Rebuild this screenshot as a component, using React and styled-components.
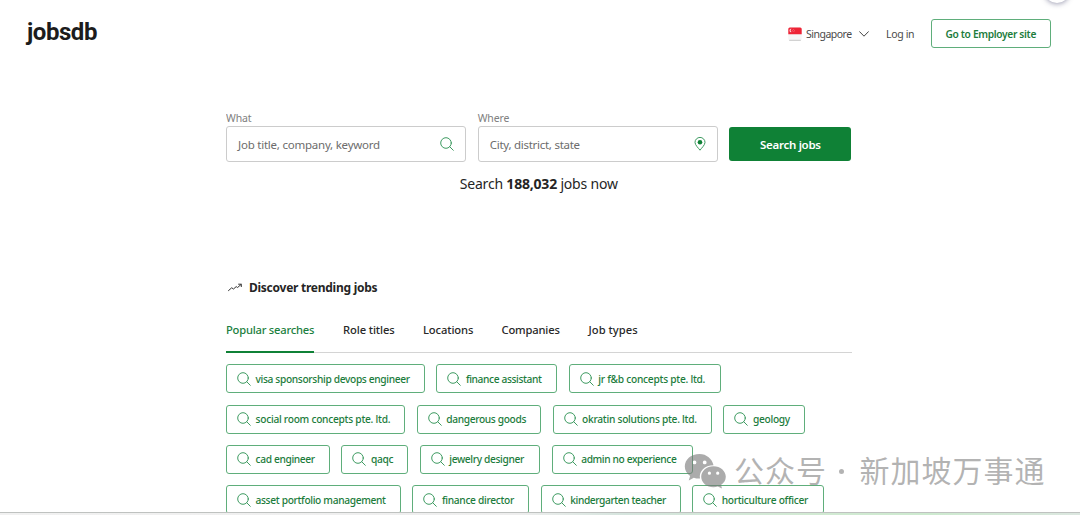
import React from "react";
import styled, { createGlobalStyle } from "styled-components";

const GlobalStyle = createGlobalStyle`
  *, *::before, *::after { box-sizing: border-box; }
  body { margin: 0; background: #fff; overflow: hidden; }
`;

const Page = styled.div`
  position: relative;
  width: 1080px;
  height: 515px;
  overflow: hidden;
  display: flex;
  flex-direction: column;
  background: #fff;
  color: #252525;
  font-family: "Noto Sans", "Open Sans", sans-serif;
  white-space: nowrap;
`;

const Header = styled.header`
  display: flex;
  align-items: center;
  height: 67px;
  flex: none;
  padding: 0 29px 0 27px;
`;

const Logo = styled.div`
  font: 700 24px/30px Roboto, sans-serif;
  color: #1c1c1c;
  letter-spacing: -0.45px;
  margin: -4px auto 0 0;
`;

const Country = styled.div`
  display: flex;
  align-items: center;
  font-size: 10.5px;
  letter-spacing: -0.5px;
  color: #4a4a4a;
  margin-right: 17px;
  svg { display: block; }
`;

const CountryName = styled.span`
  width: 46px;
  margin: 0 7px 0 4px;
`;

const Login = styled.a`
  width: 28px;
  margin-right: 16.5px;
  font-size: 10.5px;
  letter-spacing: -0.35px;
  color: #4a4a4a;
`;

const EmployerButton = styled.button`
  width: 120.5px;
  height: 29px;
  padding: 0;
  border: 1px solid #5fae7b;
  border-radius: 3px;
  background: #fff;
  color: #1c7c3c;
  font: 600 10.2px "Noto Sans", sans-serif;
  letter-spacing: -0.33px;
`;

const Main = styled.main`
  width: 625.5px;
  margin-left: 226px;
  padding-top: 43px;
  flex: 1;
  min-height: 0;
  overflow: hidden;
`;

const SearchForm = styled.div`
  display: flex;
  align-items: flex-end;
  gap: 11.5px;
`;

const Field = styled.label`
  display: block;
  width: 240.2px;
`;

const FieldLabel = styled.span`
  display: block;
  height: 16px;
  font-size: 10.5px;
  line-height: 16px;
  color: #808080;
  letter-spacing: -0.1px;
`;

const InputBox = styled.span`
  display: flex;
  align-items: center;
  justify-content: space-between;
  height: 35.5px;
  padding: 1px 11px 0;
  border: 1.5px solid #ccc;
  border-radius: 3px;
  font-size: 11.5px;
  letter-spacing: ${(p) => p.$track}px;
  color: #6c6c6c;
  svg { margin-top: -1px; }
`;

const SearchButton = styled.button`
  width: 122px;
  height: 34.5px;
  margin-bottom: 0.5px;
  padding: 2px 0 0;
  border: 0;
  border-radius: 3px;
  background: #0f8136;
  color: #fff;
  font: 600 11.5px "Noto Sans", sans-serif;
  letter-spacing: -0.3px;
`;

const Count = styled.p`
  margin: 11.5px 0 0;
  text-align: center;
  font-size: 14px;
  line-height: 22px;
  letter-spacing: -0.2px;
  b { font-weight: 700; }
`;

const TrendHeading = styled.h2`
  display: flex;
  align-items: center;
  gap: 7px;
  height: 20px;
  margin: 82px 0 0;
  padding-left: 2px;
  font-size: 12px;
  font-weight: 700;
  letter-spacing: -0.26px;
`;

const Tabs = styled.div`
  display: flex;
  gap: 29px;
  height: 40px;
  margin-top: 15.5px;
  border-bottom: 1px solid #d4d4d4;
`;

const Tab = styled.span`
  width: ${(p) => p.$w}px;
  height: 40px;
  padding-top: 9px;
  font-size: 11.2px;
  line-height: 16px;
  font-weight: 500;
  letter-spacing: ${(p) => p.$track}px;
  color: ${(p) => (p.$active ? "#1c8040" : "#282828")};
  border-bottom: 2px solid ${(p) => (p.$active ? "#0f8136" : "transparent")};
`;

const ChipList = styled.div`
  display: flex;
  flex-direction: column;
  gap: 11.3px;
  padding-top: 11.9px;
`;

const ChipRow = styled.div`
  display: flex;
  gap: 11.4px;
`;

const Chip = styled.a`
  display: flex;
  align-items: center;
  flex: none;
  gap: 4.5px;
  width: ${(p) => p.$w}px;
  height: 29px;
  padding-left: 10px;
  border: 1px solid #5fae7b;
  border-radius: 3px;
  color: #1c7c3c;
  font-size: 10.2px;
  font-weight: 550;
  letter-spacing: ${(p) => p.$track}px;
  svg { flex: none; }
`;

const BottomEdge = styled.footer`
  flex: none;
  height: 3px;
  border-top: 1px solid #bfc2c0;
  background: linear-gradient(90deg, #f1f1f1 0, #eeeeee 48%, #d5e4dd 58%, #d2ead3 75%, #cdeacf 86%, #dce7e0 100%);
`;

const FloatingBubble = styled.div`
  position: absolute;
  top: -23.5px;
  left: 1044px;
  width: 26px;
  height: 26px;
  border-radius: 50%;
  background: #fff;
  box-shadow: 0 1px 5px rgba(70, 70, 110, 0.5);
`;

const Watermark = styled.div`
  position: absolute;
  left: 684px;
  top: 447.5px;
  display: flex;
  align-items: center;
  height: 42px;
  color: rgba(120, 120, 120, 0.56);
  font: 400 30px/42px "Noto Sans CJK SC", sans-serif;
  svg { position: relative; top: 2px; }
`;

const WatermarkText = styled.span`
  width: ${(p) => p.$w}px;
  margin-left: ${(p) => p.$gap}px;
  letter-spacing: ${(p) => p.$track}px;
`;

const WatermarkDot = styled.span`
  width: 5px;
  height: 5px;
  margin: 5px 16px 0 11.5px;
  border-radius: 50%;
  background: currentColor;
`;

const SearchIcon = () => (
  <svg width="14" height="14" viewBox="0 0 14 14" fill="none" stroke="#35965a" strokeWidth="0.95" strokeLinecap="round">
    <circle cx="6" cy="6" r="5.3" />
    <path d="M9.8 9.8 13.3 13.3" />
  </svg>
);

const PinIcon = () => (
  <svg width="12" height="14" viewBox="0 0 12 14" fill="none" stroke="#35965a" strokeWidth="0.95">
    <path d="M6 13.2C4.6 11.3 1 8 1 5.4a5 5 0 0 1 10 0C11 8 7.4 11.3 6 13.2Z" />
    <circle cx="6" cy="5.3" r="2.3" fill="#0f8136" stroke="none" />
  </svg>
);

const TrendIcon = () => (
  <svg width="14" height="9" viewBox="0 0 14 9" fill="none" stroke="#333" strokeWidth="1" strokeLinecap="round" strokeLinejoin="round">
    <path d="M.5 7.6 3.7 4.8 5.5 6 8.2 3.6 9.6 4.5 13 1.5M10.6 1.2h2.7v2.4" />
  </svg>
);

const ChevronIcon = () => (
  <svg width="10" height="6" viewBox="0 0 10 6" fill="none" stroke="#444" strokeWidth="1" strokeLinecap="round">
    <path d="M.6.7 5 5.2 9.4.7" />
  </svg>
);

const FlagIcon = () => (
  <svg width="14" height="14" viewBox="0 0 14 14">
    <rect x=".3" y=".5" width="13.4" height="13" rx="1.5" fill="#f6f6f6" />
    <path d="M.3 7.3V2A1.5 1.5 0 0 1 1.8.5h10.4A1.5 1.5 0 0 1 13.7 2v5.3Z" fill="#ee2436" />
    <path d="M1.2 13.3h11.6" stroke="#bbb" strokeWidth=".8" />
    <path d="M3.6 1.8a1.7 1.7 0 1 0 0 3.3 2.1 2.1 0 0 1 0-3.3Z" fill="#fff" opacity=".85" />
    <g fill="#fff" opacity=".7">
      <circle cx="5.4" cy="2.3" r=".35" />
      <circle cx="6.4" cy="3.2" r=".35" />
      <circle cx="4.5" cy="3.2" r=".35" />
      <circle cx="5" cy="4.5" r=".35" />
      <circle cx="6" cy="4.5" r=".35" />
    </g>
  </svg>
);

const WeChatIcon = () => (
  <svg width="43" height="36" viewBox="0 0 43 36" fill="#787878" fillOpacity=".62">
    <path
      fillRule="evenodd"
      d="M15.5 1C7.2 1 .8 6.5.8 13.4c0 3.9 2 7.2 5.3 9.5L4.8 27.5l5-2.7c2 .7 4 .9 6.2.8C14.6 18.5 20.7 12.3 29.5 12.3C28.2 5.9 22.6 1 15.5 1ZM10.5 7.5a1.9 1.9 0 1 1 0 3.8 1.9 1.9 0 0 1 0-3.8ZM20.7 7.5a1.9 1.9 0 1 1 0 3.8 1.9 1.9 0 0 1 0-3.8Z"
    />
    <path
      fillRule="evenodd"
      d="M29.5 13.2c-6.9 0-12.3 4.7-12.3 10.5s5.400 10.500 12.300 10.500c1.500 0 3-.2 4.300-.7l4.200 2-1-3.600c2.900-1.900 4.800-4.900 4.800-8.200 0-5.800-5.400-10.500-12.300-10.500ZM25.400 18.600a1.600 1.600 0 1 1 0 3.200 1.600 1.600 0 0 1 0-3.200ZM33.700 18.600a1.600 1.600 0 1 1 0 3.200 1.600 1.600 0 0 1 0-3.200Z"
    />
  </svg>
);

const tabs = [
  ["Popular searches", 88, -0.23],
  ["Role titles", 51, -0.1],
  ["Locations", 49.5, -0.12],
  ["Companies", 58, -0.17],
  ["Job types", 50, 0.03],
];

const chipRows = [
  [["visa sponsorship devops engineer", 199, -0.34], ["finance assistant", 121, -0.37], ["jr f&b concepts pte. ltd.", 152, -0.26]],
  [["social room concepts pte. ltd.", 179.3, -0.26], ["dangerous goods", 124.5, -0.35], ["okratin solutions pte. ltd.", 159.5, -0.27], ["geology", 82, -0.3]],
  [["cad engineer", 104, -0.35], ["qaqc", 67, -0.3], ["jewelry designer", 120.5, -0.35], ["admin no experience", 141, -0.37]],
  [["asset portfolio management", 175, -0.33], ["finance director", 117, -0.3], ["kindergarten teacher", 140, -0.4], ["horticulture officer", 131.5, -0.28]],
];

export default function App() {
  return (
    <Page>
      <GlobalStyle />
      <Header>
        <Logo>jobsdb</Logo>
        <Country>
          <FlagIcon />
          <CountryName>Singapore</CountryName>
          <ChevronIcon />
        </Country>
        <Login>Log in</Login>
        <EmployerButton>Go to Employer site</EmployerButton>
      </Header>
      <Main>
        <SearchForm>
          <Field>
            <FieldLabel>What</FieldLabel>
            <InputBox $track={-0.23}>
              Job title, company, keyword
              <SearchIcon />
            </InputBox>
          </Field>
          <Field>
            <FieldLabel>Where</FieldLabel>
            <InputBox $track={-0.27}>
              City, district, state
              <PinIcon />
            </InputBox>
          </Field>
          <SearchButton>Search jobs</SearchButton>
        </SearchForm>
        <Count>
          Search <b>188,032</b> jobs now
        </Count>
        <TrendHeading>
          <TrendIcon />
          Discover trending jobs
        </TrendHeading>
        <Tabs>
          {tabs.map(([label, w, track], i) => (
            <Tab key={label} $w={w} $track={track} $active={i === 0}>
              {label}
            </Tab>
          ))}
        </Tabs>
        <ChipList>
          {chipRows.map((row, i) => (
            <ChipRow key={i}>
              {row.map(([label, w, track]) => (
                <Chip key={label} $w={w} $track={track}>
                  <SearchIcon />
                  {label}
                </Chip>
              ))}
            </ChipRow>
          ))}
        </ChipList>
      </Main>
      <BottomEdge />
      <FloatingBubble />
      <Watermark>
        <WeChatIcon />
        <WatermarkText $w={93} $gap={7} $track={1}>公众号</WatermarkText>
        <WatermarkDot />
        <WatermarkText $w={187} $gap={0} $track={1}>新加坡万事通</WatermarkText>
      </Watermark>
    </Page>
  );
}
